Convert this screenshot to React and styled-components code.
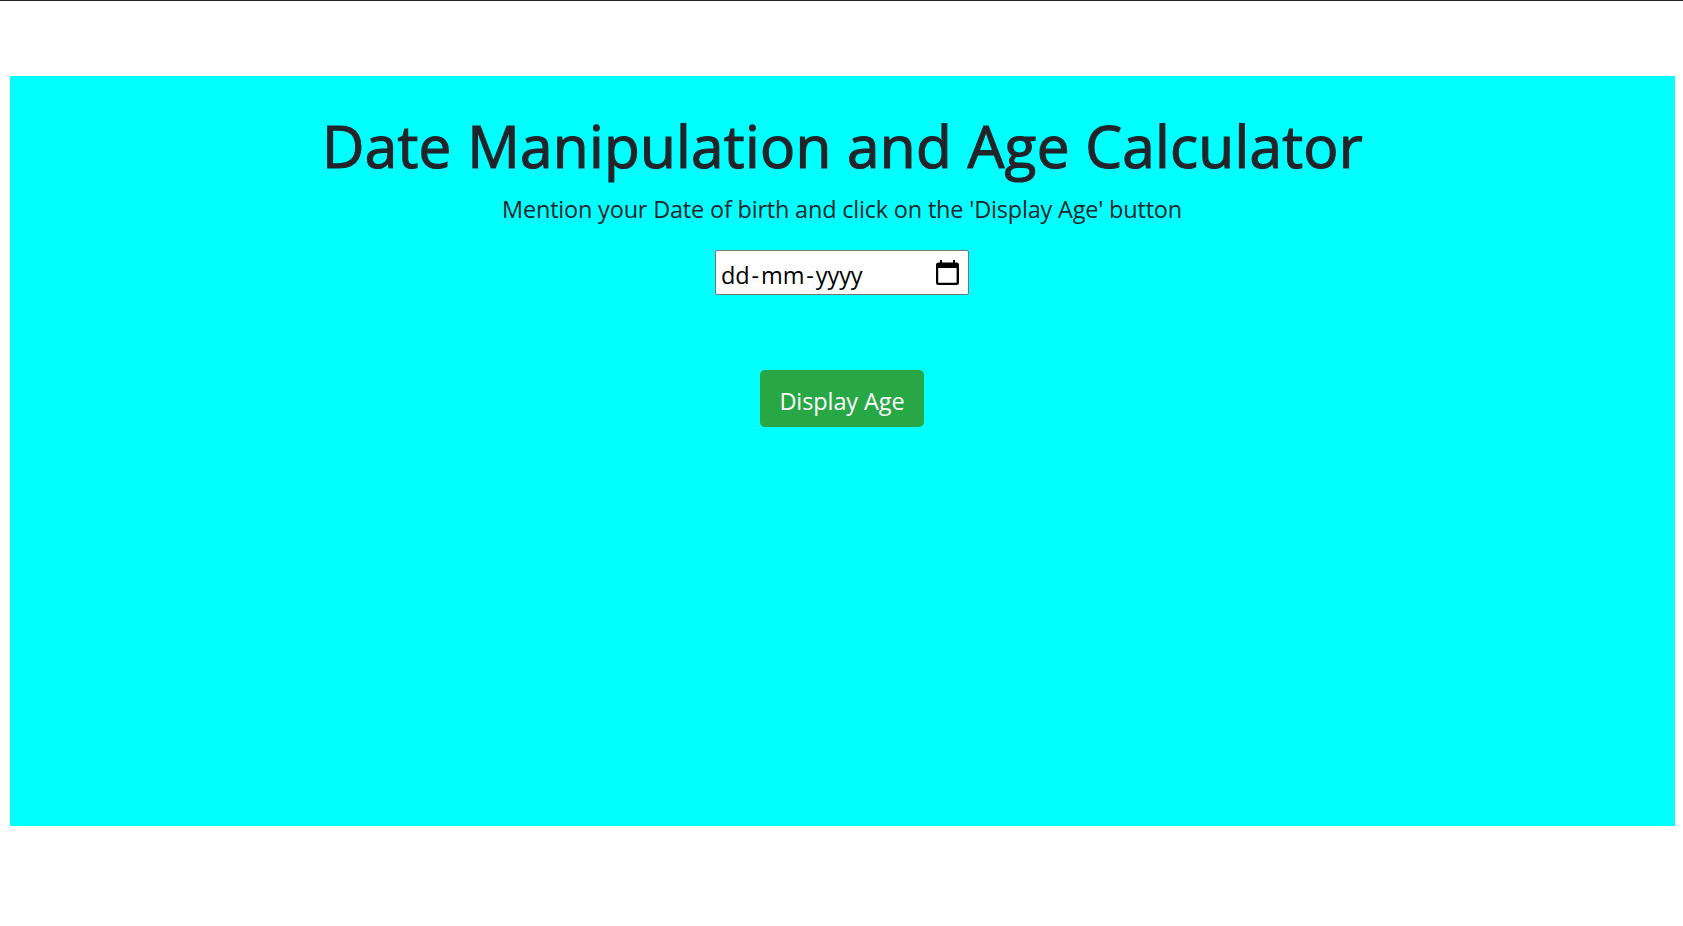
import React from "react";
import styled, { createGlobalStyle } from "styled-components";

const GlobalStyle = createGlobalStyle`
  *, *::before, *::after { box-sizing: border-box; }
  body {
    margin: 0;
    background: #fff;
    color: #212529;
    font-family: "Open Sans", "Noto Sans", sans-serif;
  }
`;

const Page = styled.div`
  height: 926px;
  padding: 75px 8px 0 10px;
  border-top: 1px solid #212529;
  overflow: hidden;
`;

const Panel = styled.main`
  display: flex;
  flex-direction: column;
  align-items: center;
  height: 750px;
  padding-top: 31px;
  background: #00ffff;
`;

const Title = styled.h1`
  margin: 0;
  font-size: 58.5px;
  font-weight: 400;
  line-height: 76px;
  letter-spacing: 0.25px;
  -webkit-text-stroke: 1.2px currentColor;
  white-space: nowrap;
`;

const Hint = styled.p`
  margin: 8px 1px 0 0;
  font-size: 23.5px;
  line-height: 36px;
  letter-spacing: -0.2px;
  white-space: nowrap;
`;

const DateField = styled.div`
  display: flex;
  align-items: center;
  justify-content: space-between;
  width: 254px;
  height: 45px;
  margin: 23px 1px 0 0;
  padding: 4px 9px 0 5px;
  border: 1px solid #767676;
  border-radius: 2px;
  background: #fff;
  color: #000;
`;

const DateText = styled.span`
  display: flex;
  gap: 2px;
  font-size: 23.5px;
  line-height: 36px;
  letter-spacing: -0.1px;
  white-space: nowrap;
`;

const CalendarIcon = styled.svg`
  width: 23px;
  height: 25px;
  margin-top: -5px;
`;

const Button = styled.button`
  width: 164px;
  height: 57px;
  margin: 75px 1px 0 0;
  padding: 4px 0 0;
  border: 0;
  border-radius: 5px;
  background: #28a745;
  color: #fff;
  font: 400 23.5px/36px "Open Sans", "Noto Sans", sans-serif;
  letter-spacing: -0.1px;
  white-space: nowrap;
`;

export default function App() {
  return (
    <>
      <GlobalStyle />
      <Page>
        <Panel>
          <Title>Date Manipulation and Age Calculator</Title>
          <Hint>Mention your Date of birth and click on the 'Display Age' button</Hint>
          <DateField>
            <DateText>
              <span>dd</span>
              <span>-</span>
              <span>mm</span>
              <span>-</span>
              <span>yyyy</span>
            </DateText>
            <CalendarIcon viewBox="0 0 23 25" aria-hidden="true">
              <path
                fillRule="evenodd"
                d="M4 0h2v2.500h11V0h2v2.500h1.500a2.500 2.500 0 0 1 2.500 2.500v17.500a2.500 2.500 0 0 1-2.500 2.500h-18A2.500 2.500 0 0 1 0 22.500V5a2.500 2.500 0 0 1 2.500-2.500H4ZM2.200 8v14.700h18.400V8Z"
              />
            </CalendarIcon>
          </DateField>
          <Button type="button">Display Age</Button>
        </Panel>
      </Page>
    </>
  );
}
